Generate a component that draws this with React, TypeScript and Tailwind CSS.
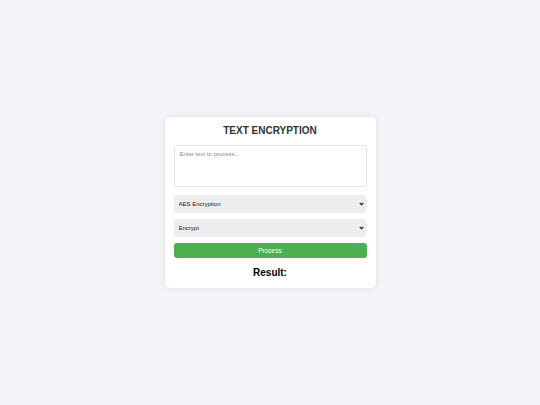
function Chevron() {
  return (
    <svg
      className="pointer-events-none absolute top-1/2 right-[3px] h-[4px] w-[5px] -translate-y-1/2"
      viewBox="0 0 10 8"
      fill="none"
      stroke="#222"
      strokeWidth="2.4"
    >
      <path d="M1.5 2l3.5 3.5L8.5 2" />
    </svg>
  );
}

function Dropdown({ options, className }: { options: string[]; className: string }) {
  return (
    <div className={`relative flex w-full ${className}`}>
      <select className="block h-[18px] w-full appearance-none rounded-[3px] bg-[#eee] px-[5px] text-[6px] leading-[18px] text-[#111] outline-none">
        {options.map((o) => (
          <option key={o}>{o}</option>
        ))}
      </select>
      <Chevron />
    </div>
  );
}

export default function App() {
  return (
    <div
      className="flex min-h-screen w-full items-center justify-center bg-[#f4f4f9] text-[#333]"
      style={{ fontFamily: '"Liberation Sans", Arial, sans-serif' }}
    >
      <div className="flex w-[211px] flex-col rounded-[5px] bg-white px-[9px] pt-[7px] pb-[9px] shadow-[0_0_6px_rgba(0,0,0,0.1)]">
        <h2 className="text-center text-[10px] leading-[14px] font-bold">TEXT ENCRYPTION</h2>

        <textarea
          placeholder="Enter text to process..."
          className="mt-[7px] block h-[42px] w-full resize-none rounded-[3px] border border-[#e4e4e4] px-[5px] py-[4px] text-[6px] outline-none placeholder:text-[#8a8a8a]"
        />

        <Dropdown className="mt-[8px]" options={['AES Encryption', 'Base64 Encoding']} />
        <Dropdown className="mt-[6px]" options={['Encrypt', 'Decrypt']} />

        <button
          type="button"
          className="mt-[6px] h-[15px] w-full rounded-[3px] bg-[#4caf50] text-[6.5px] text-white"
        >
          Process
        </button>

        <h3 className="mt-[9px] text-center text-[10px] leading-[12px] font-bold text-black">Result:</h3>
      </div>
    </div>
  );
}
